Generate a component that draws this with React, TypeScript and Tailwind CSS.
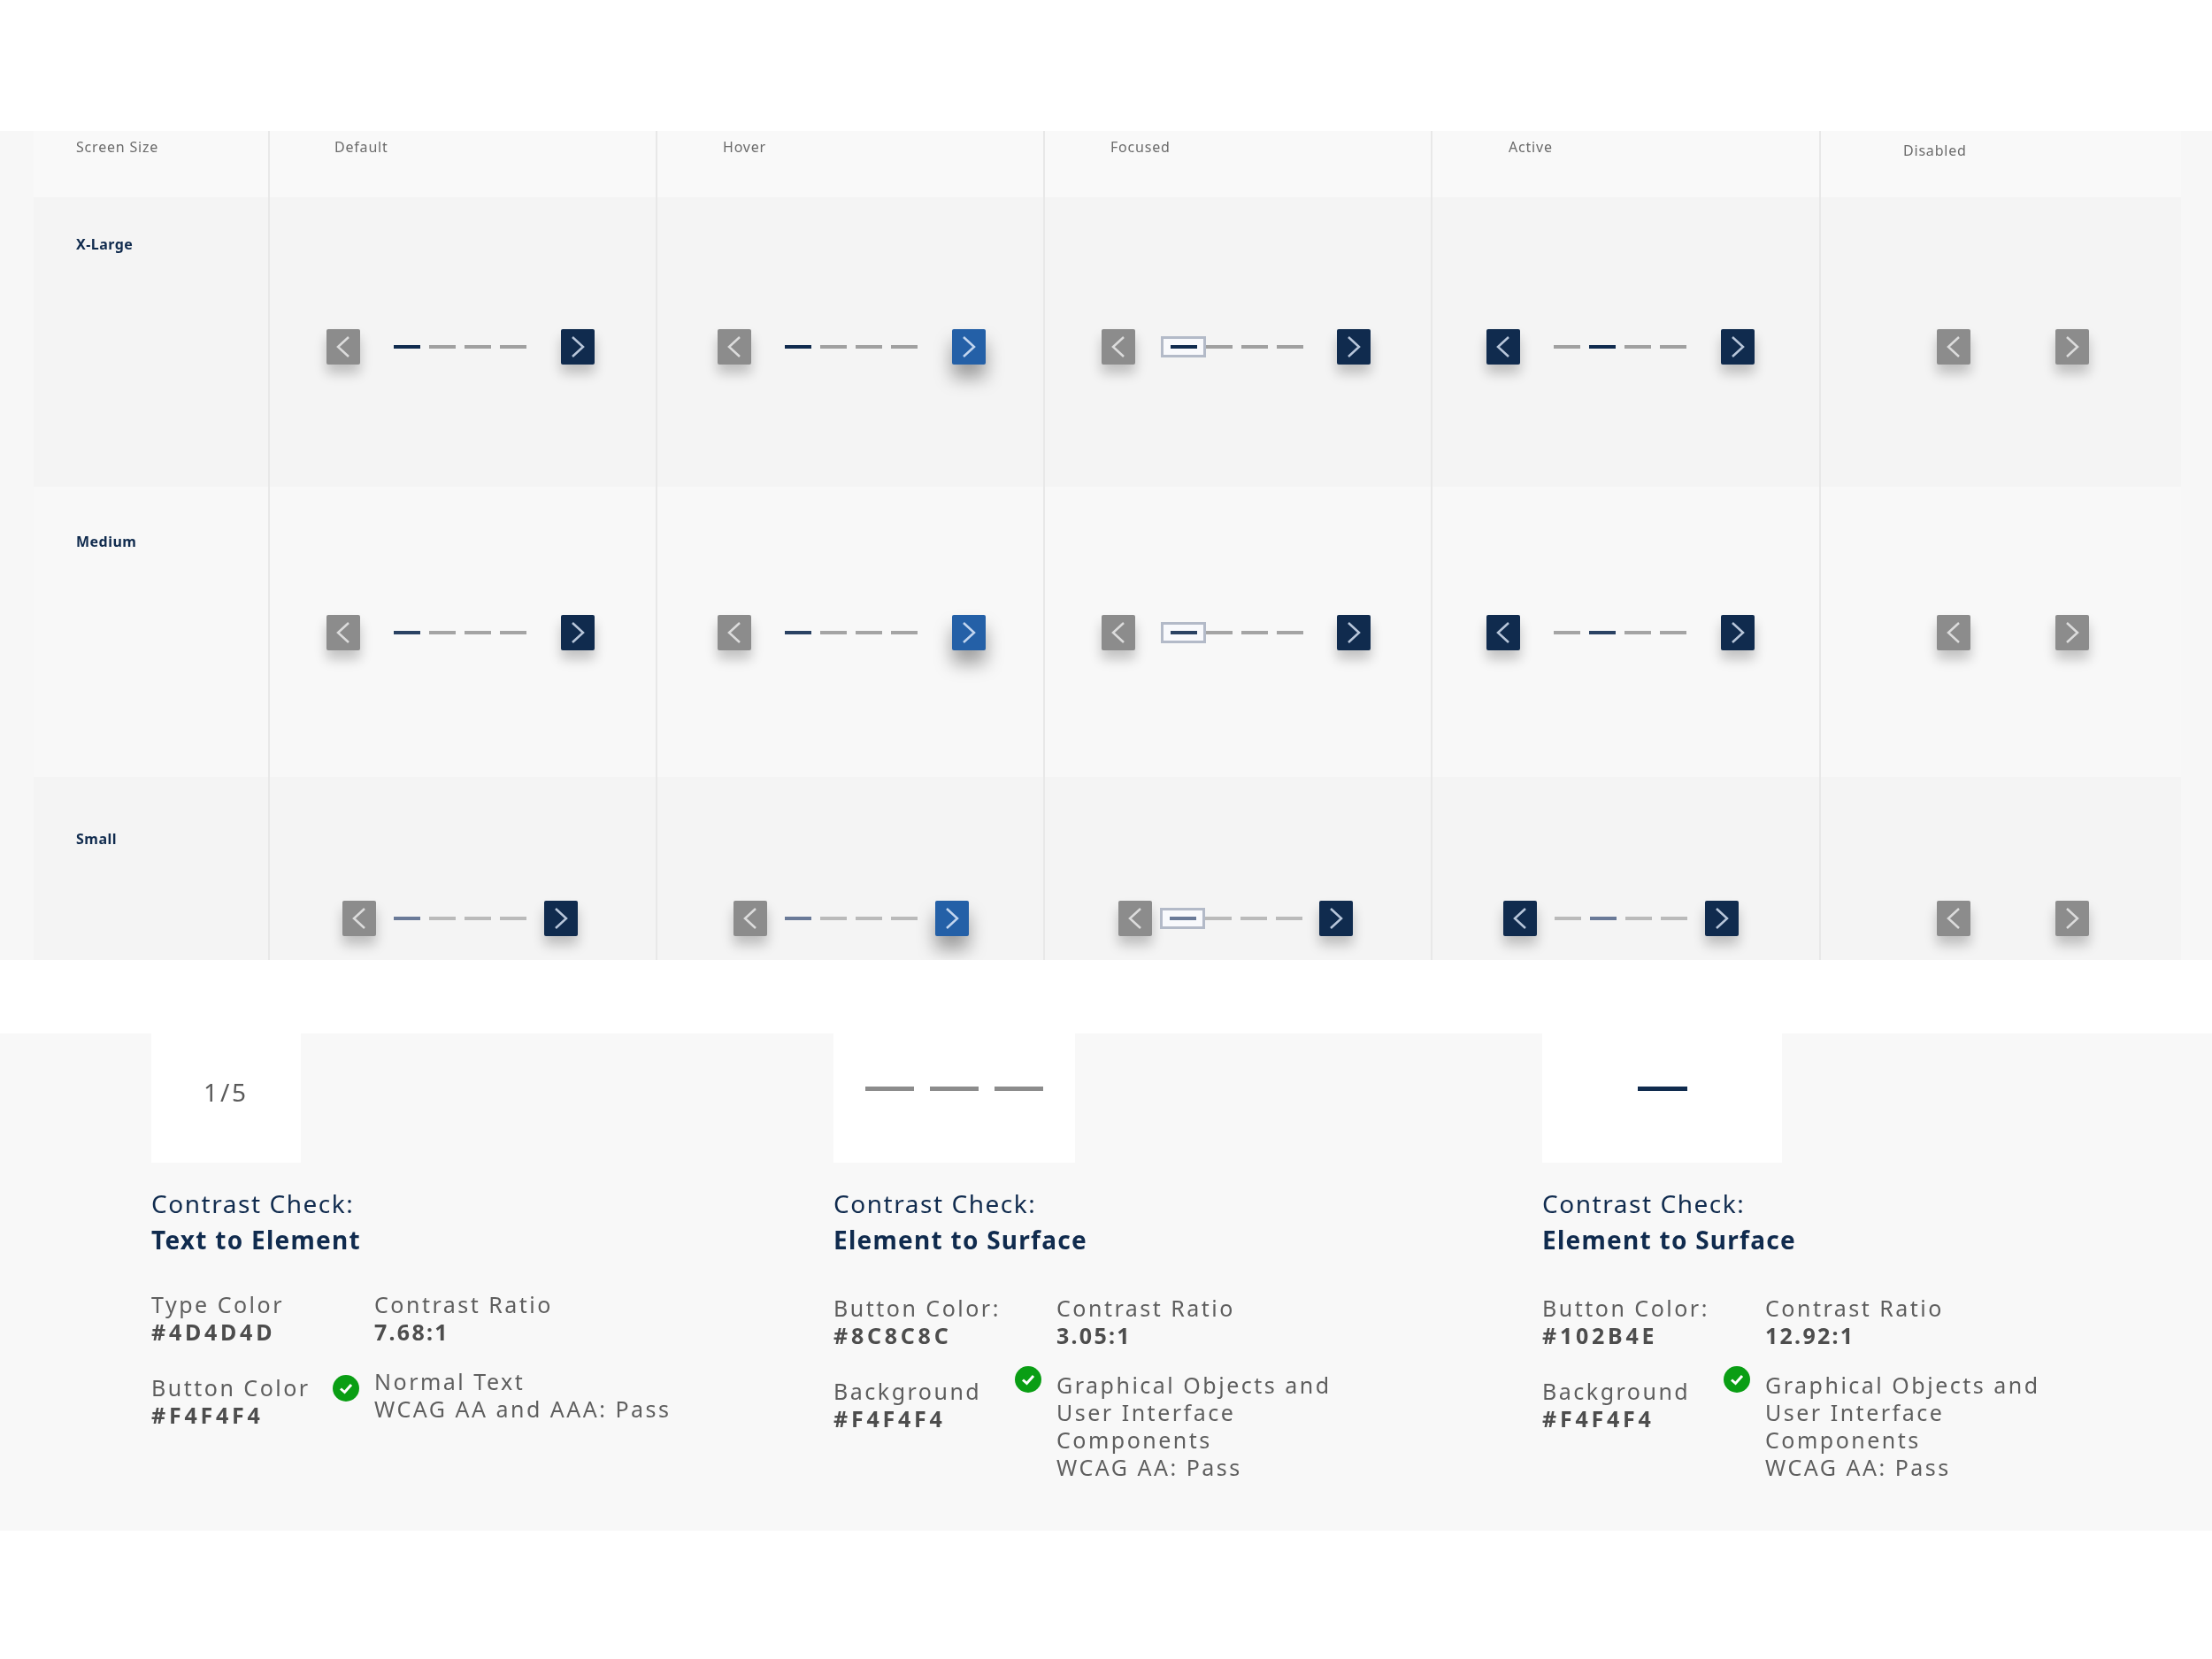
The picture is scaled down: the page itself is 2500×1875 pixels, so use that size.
import clsx from "clsx";

type PagerState = "default" | "hover" | "focused" | "active" | "disabled";
type RowSize = "xl" | "md" | "sm";

const font = "font-['Noto_Sans',sans-serif]";

function Chevron({ side, stroke }: { side: "left" | "right"; stroke: string }) {
  return (
    <svg width="38" height="40" viewBox="0 0 38 40" fill="none">
      <polyline
        points={side === "left" ? "25,9 13,20 25,31" : "13,9 25,20 13,31"}
        stroke={stroke}
        strokeWidth="2.5"
      />
    </svg>
  );
}

function PageButton({ side, tone }: { side: "left" | "right"; tone: "gray" | "navy" | "blue" }) {
  return (
    <div
      className={clsx(
        "h-10 w-[38px] shrink-0 rounded-[2px]",
        tone === "gray" && "bg-[#8c8c8c] shadow-[0_10px_14px_rgba(0,0,0,0.22)]",
        tone === "navy" && "bg-[#102b4e] shadow-[0_10px_14px_rgba(0,0,0,0.22)]",
        tone === "blue" && "bg-[#2460a7] shadow-[0_15px_20px_rgba(0,0,0,0.36)]",
      )}
    >
      <Chevron side={side} stroke={tone === "gray" ? "#dcdcdc" : tone === "navy" ? "#b8c6da" : "#c3d6ef"} />
    </div>
  );
}

function Dash({ on, size }: { on: boolean; size: RowSize }) {
  return (
    <div
      className={clsx(
        "h-1 w-[30px] shrink-0",
        size === "xl" && (on ? "bg-[#102b4e]" : "bg-[#a0a0a0]"),
        size === "md" && (on ? "bg-[#2a4263]" : "bg-[#a4a4a4]"),
        size === "sm" && (on ? "bg-[#6a7a98]" : "bg-[#bababa]"),
      )}
    />
  );
}

function Pager({ state, size }: { state: PagerState; size: RowSize }) {
  if (state === "disabled") {
    return (
      <div className="flex gap-24">
        <PageButton side="left" tone="gray" />
        <PageButton side="right" tone="gray" />
      </div>
    );
  }
  const small = size === "sm";
  const active = state === "active" ? 1 : 0;
  return (
    <div className="flex items-center">
      <PageButton side="left" tone={state === "active" ? "navy" : "gray"} />
      {state === "focused" ? (
        <div className={clsx("flex items-center", small ? "ml-[9px] mr-[19px]" : "ml-[29px] mr-[38px]")}>
          <div className="flex h-6 w-[51px] items-center justify-center border-[3px] border-[#b3bac8] bg-[#f8f9fc]">
            <Dash on size={size} />
          </div>
          <Dash on={false} size={size} />
          <div className="ml-2.5 flex gap-2.5">
            <Dash on={false} size={size} />
            <Dash on={false} size={size} />
          </div>
        </div>
      ) : (
        <div className={clsx("flex gap-2.5", small ? "mx-5" : "ml-[38px] mr-[39px]")}>
          {[0, 1, 2, 3].map((i) => (
            <Dash key={i} on={i === active} size={size} />
          ))}
        </div>
      )}
      <PageButton side="right" tone={state === "hover" ? "blue" : "navy"} />
    </div>
  );
}

const states: { state: PagerState; label: string; head: string; xl: string; sm: string }[] = [
  { state: "default", label: "Default", head: "pl-[73px] pt-2", xl: "pl-16", sm: "pl-[82px]" },
  { state: "hover", label: "Hover", head: "pl-[74px] pt-2", xl: "pl-[68px]", sm: "pl-[86px]" },
  { state: "focused", label: "Focused", head: "pl-[74px] pt-2", xl: "pl-16", sm: "pl-[83px]" },
  { state: "active", label: "Active", head: "pl-[86px] pt-2", xl: "pl-[61px]", sm: "pl-20" },
  { state: "disabled", label: "Disabled", head: "pl-[93px] pt-3", xl: "pl-[131px]", sm: "pl-[131px]" },
];

const rows: { size: RowSize; label: string; box: string; labelPad: string; cellPad: string }[] = [
  { size: "xl", label: "X-Large", box: "h-[327px] bg-[#f4f4f4]", labelPad: "pt-[43px]", cellPad: "pt-[149px]" },
  { size: "md", label: "Medium", box: "h-[328px] bg-[#f8f8f8]", labelPad: "pt-[52px]", cellPad: "pt-[145px]" },
  { size: "sm", label: "Small", box: "h-[207px] bg-[#f4f4f4]", labelPad: "pt-[60px]", cellPad: "pt-[140px]" },
];

const tableCols = "grid grid-cols-[265px_438px_438px_438px_439px_1fr]";

function StateTable() {
  return (
    <div className="h-[937px] overflow-hidden bg-[#f7f7f7] pl-[38px] pr-[35px]">
      <div className={clsx(tableCols, "h-[75px] bg-[#f9f9f9]")}>
        <div className="pl-12 pt-2 text-[16px] leading-5 tracking-[0.05em] text-[#6b6b6b]">Screen Size</div>
        {states.map((s) => (
          <div
            key={s.state}
            className={clsx("border-l-2 border-[#e8e8e8] text-[16px] leading-5 tracking-[0.05em] text-[#6b6b6b]", s.head)}
          >
            {s.label}
          </div>
        ))}
      </div>
      {rows.map((r) => (
        <div key={r.size} className={clsx(tableCols, r.box)}>
          <div className={clsx("pl-12 text-[16px] font-bold leading-5 tracking-[0.03em] text-[#102b4e]", r.labelPad)}>
            {r.label}
          </div>
          {states.map((s) => (
            <div
              key={s.state}
              className={clsx("border-l-2 border-[#e8e8e8]", r.cellPad, r.size === "sm" ? s.sm : s.xl)}
            >
              <Pager state={s.state} size={r.size} />
            </div>
          ))}
        </div>
      ))}
    </div>
  );
}

function PassIcon() {
  return (
    <svg width="30" height="30" viewBox="0 0 30 30">
      <circle cx="15" cy="15" r="15" fill="#0a9e14" />
      <polyline points="9,15.5 13.5,19.5 21,11" fill="none" stroke="#fff" strokeWidth="3" />
    </svg>
  );
}

type CheckCol = {
  kind: string;
  topLabel: string;
  topValue: string;
  botLabel: string;
  botValue: string;
  ratio: string;
  result: string[];
  detailTop: string;
  iconPad: string;
  card: React.ReactNode;
  cardWidth: string;
};

const checks: CheckCol[] = [
  {
    kind: "Text to Element",
    topLabel: "Type Color",
    topValue: "#4D4D4D",
    botLabel: "Button Color",
    botValue: "#F4F4F4",
    ratio: "7.68:1",
    result: ["Normal Text", "WCAG AA and AAA: Pass"],
    detailTop: "mt-[37px]",
    iconPad: "pt-2",
    cardWidth: "w-[169px]",
    card: <span className="-mt-3.5 text-[28px] tracking-[0.1em] text-[#5a5a5a]">1/5</span>,
  },
  {
    kind: "Element to Surface",
    topLabel: "Button Color:",
    topValue: "#8C8C8C",
    botLabel: "Background",
    botValue: "#F4F4F4",
    ratio: "3.05:1",
    result: ["Graphical Objects and", "User Interface", "Components", "WCAG AA: Pass"],
    detailTop: "mt-[41px]",
    iconPad: "-translate-y-1.5",
    cardWidth: "w-[273px]",
    card: (
      <div className="-mt-[22px] flex gap-[18px]">
        <div className="h-[5px] w-[55px] bg-[#8c8c8c]" />
        <div className="h-[5px] w-[55px] bg-[#8c8c8c]" />
        <div className="h-[5px] w-[55px] bg-[#8c8c8c]" />
      </div>
    ),
  },
  {
    kind: "Element to Surface",
    topLabel: "Button Color:",
    topValue: "#102B4E",
    botLabel: "Background",
    botValue: "#F4F4F4",
    ratio: "12.92:1",
    result: ["Graphical Objects and", "User Interface", "Components", "WCAG AA: Pass"],
    detailTop: "mt-[41px]",
    iconPad: "-translate-y-1.5",
    cardWidth: "w-[271px]",
    card: <div className="-mt-[22px] h-[5px] w-14 bg-[#102b4e]" />,
  },
];

function CheckColumn({ c }: { c: CheckCol }) {
  return (
    <div>
      <div className={clsx("flex h-[146px] items-center justify-center bg-white", c.cardWidth)}>{c.card}</div>
      <div className="mt-[26px] text-[28px] leading-[41px] text-[#102b4e]">
        <div className="tracking-[0.055em]">Contrast Check:</div>
        <div className="font-bold tracking-[0.045em]">{c.kind}</div>
      </div>
      <div
        className={clsx(
          "grid grid-cols-[205px_47px_1fr] text-[25px] leading-[31px] tracking-[0.1em] text-[#5e5e5e]",
          c.detailTop,
        )}
      >
        <div className="col-span-2">
          <div>{c.topLabel}</div>
          <div className="font-bold tracking-[0.15em] text-[#4d4d4d]">{c.topValue}</div>
        </div>
        <div>
          <div>Contrast Ratio</div>
          <div className="font-bold tracking-[0.09em] text-[#4d4d4d]">{c.ratio}</div>
        </div>
        <div className="mt-8 whitespace-nowrap">
          <div>{c.botLabel}</div>
          <div className="font-bold tracking-[0.15em] text-[#4d4d4d]">{c.botValue}</div>
        </div>
        <div className={clsx("mt-[25px]", c.iconPad)}>
          <PassIcon />
        </div>
        <div className="mt-[25px]">
          {c.result.map((line) => (
            <div key={line} className="whitespace-nowrap">
              {line}
            </div>
          ))}
        </div>
      </div>
    </div>
  );
}

export default function App() {
  return (
    <div className={clsx("h-[1875px] w-[2500px] overflow-hidden bg-white pt-[148px] blur-[0.6px]", font)}>
      <StateTable />
      <div className="mt-[83px] grid h-[562px] grid-cols-[771px_801px_1fr] bg-[#f8f8f8] pl-[171px]">
        {checks.map((c) => (
          <CheckColumn key={c.topValue} c={c} />
        ))}
      </div>
    </div>
  );
}
